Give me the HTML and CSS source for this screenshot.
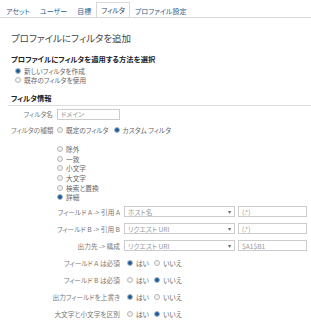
FILE: index.html
```html
<!DOCTYPE html>
<html lang="ja">
<head>
  <meta charset="UTF-8" />
  <title>フィルタ</title>
  <link rel="stylesheet" href="styles.css">
</head>
<body>
  <div class="tabs">
    <a class="tab">アセット</a>
    <a class="tab">ユーザー</a>
    <a class="tab">目標</a>
    <a class="tab active">フィルタ</a>
    <a class="tab">プロファイル設定</a>
  </div>

  <div class="main">
    <h1>プロファイルにフィルタを追加</h1>

    <h2>プロファイルにフィルタを適用する方法を選択</h2>
    <div class="method">
      <label class="opt"><input type="radio" name="method" checked> 新しいフィルタを作成</label>
      <label class="opt"><input type="radio" name="method"> 既存のフィルタを使用</label>
    </div>

    <h2 class="section">フィルタ情報</h2>

    <div class="row">
      <span class="lbl">フィルタ名</span>
      <input class="txt name" type="text" value="ドメイン">
    </div>

    <div class="row">
      <span class="lbl">フィルタの種類</span>
      <label class="opt"><input type="radio" name="kind"> 既定のフィルタ</label>
      <label class="opt gap"><input type="radio" name="kind" checked> カスタム フィルタ</label>
    </div>

    <div class="kinds">
      <label class="opt"><input type="radio" name="custom"> 除外</label>
      <label class="opt"><input type="radio" name="custom"> 一致</label>
      <label class="opt"><input type="radio" name="custom"> 小文字</label>
      <label class="opt"><input type="radio" name="custom"> 大文字</label>
      <label class="opt"><input type="radio" name="custom"> 検索と置換</label>
      <label class="opt"><input type="radio" name="custom" checked> 詳細</label>
    </div>

    <div class="row wide">
      <span class="lbl">フィールド A -&gt; 引用 A</span>
      <div class="sel"><span>ホスト名</span><span class="arrow">▾</span></div>
      <input class="txt expr" type="text" value="(.*)">
    </div>
    <div class="row wide">
      <span class="lbl">フィールド B -&gt; 引用 B</span>
      <div class="sel"><span>リクエスト URI</span><span class="arrow">▾</span></div>
      <input class="txt expr" type="text" value="(.*)">
    </div>
    <div class="row wide">
      <span class="lbl">出力先 -&gt; 構成</span>
      <div class="sel"><span>リクエスト URI</span><span class="arrow">▾</span></div>
      <input class="txt expr" type="text" value="$A1$B1">
    </div>

    <div class="row wide yn">
      <span class="lbl">フィールド A は必須</span>
      <label class="opt"><input type="radio" name="a" checked> はい</label>
      <label class="opt"><input type="radio" name="a"> いいえ</label>
    </div>
    <div class="row wide yn">
      <span class="lbl">フィールド B は必須</span>
      <label class="opt"><input type="radio" name="b"> はい</label>
      <label class="opt"><input type="radio" name="b" checked> いいえ</label>
    </div>
    <div class="row wide yn">
      <span class="lbl">出力フィールドを上書き</span>
      <label class="opt"><input type="radio" name="o" checked> はい</label>
      <label class="opt"><input type="radio" name="o"> いいえ</label>
    </div>
    <div class="row wide yn">
      <span class="lbl">大文字と小文字を区別</span>
      <label class="opt"><input type="radio" name="c"> はい</label>
      <label class="opt"><input type="radio" name="c" checked> いいえ</label>
    </div>
  </div>
</body>
</html>
```

FILE: styles.css
```css
body { margin: 0; font-family: "Noto Sans CJK JP", sans-serif; font-size: 6.7px; color: #666; background: #fff; font-feature-settings: "palt"; }

.tabs { display: flex; padding: 3px 0 0 1px; height: 14px; border-bottom: 1px solid #d8d8d8; font-size: 7px; }
.tab { padding: 0 4px; line-height: 14px; color: #2a5f8f; border: 1px solid transparent; border-bottom: none; }
.tab.active { color: #444; border-color: #d8d8d8; background: #fff; height: 14px; margin: -1px 0 -1px; line-height: 15px; }

.main { padding: 0 0 0 11px; }
h1 { margin: 14px 0 0; font-size: 9.5px; font-weight: normal; color: #444; line-height: 12px; }
h2 { margin: 10px 0 0; font-size: 7.3px; font-weight: bold; color: #222; line-height: 10px; }
h2.section { margin: 9px 0 0 -3px; padding: 0 0 2px 3px; border-bottom: 1px solid #ddd; }

.method { padding: 2px 0 0 4px; }
.method .opt { height: 9px; }

.opt { display: flex; align-items: center; gap: 2px; color: #666; white-space: nowrap; }
.opt input { appearance: none; margin: 0 1px 0 0; width: 6px; height: 6px; border: 1px solid #b8b8b8; border-radius: 50%; background: #f2f2f2; flex: none; }
.opt input:checked { background: radial-gradient(circle, #1d5f9e 0 2px, #dfe8f0 2.5px); border-color: #9ab; }

.row { display: flex; align-items: center; height: 16px; }
.lbl { width: 42px; text-align: right; margin-right: 4px; color: #777; flex: none; white-space: nowrap; }
.row .opt.gap { margin-left: 5px; }

.txt { font: inherit; font-feature-settings: "palt"; color: #999; border: 1px solid #ccc; height: 9px; padding: 0 3px; box-sizing: content-box; }
.name { width: 55px; }

.kinds { padding: 6px 0 1px 46px; }
.kinds .opt { height: 9.7px; }

.row.wide { height: 17px; }
.wide .lbl { width: 109px; margin-right: 4px; }
.sel { display: flex; justify-content: space-between; align-items: center; width: 103px; height: 9px; padding: 0 3px; border: 1px solid #ccc; color: #999; margin-right: 3px; }
.arrow { color: #666; font-size: 6px; }
.expr { width: 61px; }

.yn .lbl { margin-right: 7px; }
.yn .opt { margin-right: 5px; }
```
